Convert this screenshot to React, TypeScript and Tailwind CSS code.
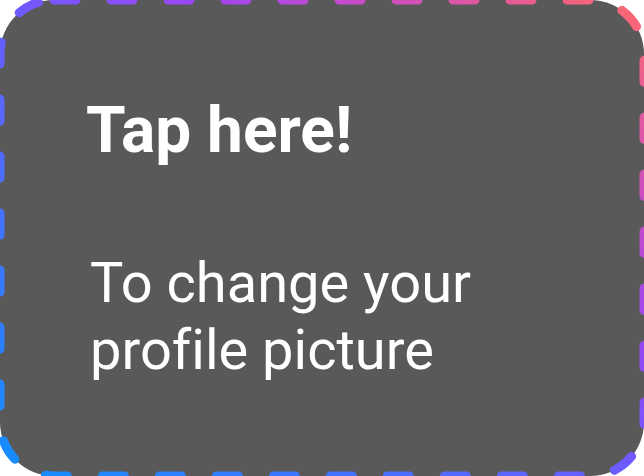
/**
 * Profile picture hint card.
 * Grey rounded card with a gradient dashed outline and two lines of copy.
 */

function DashedOutline() {
  // gradient runs from bottom-left (blue) to top-right (coral)
  return (
    <svg className="pointer-events-none absolute inset-0 h-full w-full" aria-hidden="true">
      <defs>
        <linearGradient id="outline" x1="0" y1="1" x2="1" y2="0">
          <stop offset="0" stopColor="#128fff" />
          <stop offset="0.5" stopColor="#6d5bff" />
          <stop offset="0.65" stopColor="#9c45f2" />
          <stop offset="0.78" stopColor="#c94cc8" />
          <stop offset="1" stopColor="#ff6a6a" />
        </linearGradient>
      </defs>
      <rect
        x="0"
        y="0"
        width="100%"
        height="100%"
        rx="54"
        fill="none"
        stroke="url(#outline)"
        strokeWidth="9"
        strokeDasharray="22 35"
        strokeLinecap="round"
      />
    </svg>
  );
}

export default function App() {
  return (
    <div className="h-screen w-full bg-white font-['Roboto',sans-serif] [font-variant-ligatures:none]">
      <div className="relative flex h-full w-full flex-col rounded-[54px] bg-[#595959] pl-[86px] pt-[92px] text-white">
        <h1 className="text-[64px] font-bold leading-[77px]">Tap here!</h1>
        <p className="mt-[81px] pl-[4px] text-[56px] leading-[67px]">
          To change your
          <br />
          profile picture
        </p>
        <DashedOutline />
      </div>
    </div>
  );
}
